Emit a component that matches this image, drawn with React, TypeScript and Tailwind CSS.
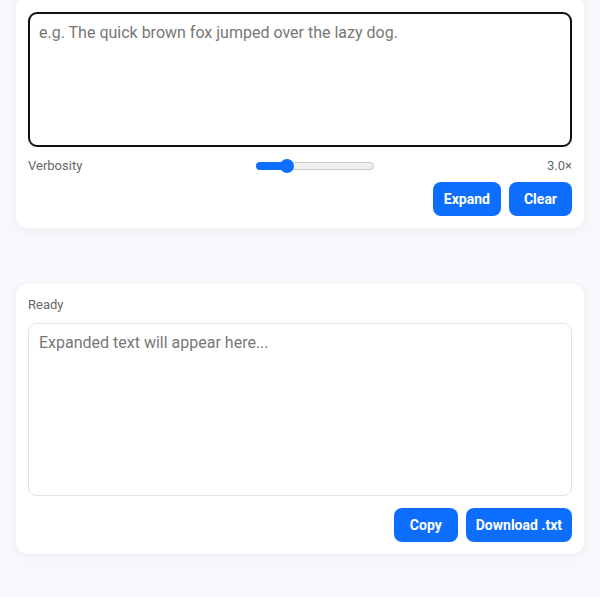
import { useState } from "react";

export default function App() {
  const [input, setInput] = useState("");
  const [verbosity] = useState(3);
  const percent = ((verbosity - 1) / 9) * 100;

  return (
    <main
      className="min-h-screen w-full bg-[#f6f8fb] px-4 pb-10"
      style={{ fontFamily: "Roboto, 'Liberation Sans', sans-serif" }}
    >
      <section className="-mt-[3px] rounded-xl bg-white p-3 pt-[15px] shadow-[0_2px_10px_rgba(15,23,42,0.05)]">
        <textarea
          autoFocus
          className="block h-[135px] w-full resize-none rounded-[9px] border-2 border-[#111] bg-white px-[9px] py-[7px] text-base text-[#222] placeholder:text-[#777] outline-none"
          placeholder="e.g. The quick brown fox jumped over the lazy dog."
          value={input}
          onChange={(event) => setInput(event.currentTarget.value)}
        />
        <div className="mt-[8px] flex h-[22px] items-center text-[13px] text-[#666]">
          <span className="w-[228px]">Verbosity</span>
          <div className="relative h-4 w-[118px]">
            <div className="absolute inset-x-0 top-1/2 h-2 -translate-y-1/2 rounded-full border border-[#c9c9c9] bg-[#efefef]" />
            <div
              className="absolute left-0 top-1/2 h-2 -translate-y-1/2 rounded-full bg-[#0d6efd]"
              style={{ width: `calc(${percent}% + 8px)` }}
            />
            <div
              className="absolute top-1/2 h-[14px] w-[14px] -translate-y-1/2 rounded-full bg-[#0d6efd]"
              style={{ left: `calc(${percent}% * 0.88 + 1px)` }}
            />
          </div>
          <span className="flex-1 text-right">{verbosity.toFixed(1)}×</span>
        </div>
        <div className="mt-[5px] flex justify-end gap-2">
          <button
            className="h-[34px] rounded-lg bg-[#0d6efd] px-[11px] text-sm font-bold text-white"
            type="button"
          >
            Expand
          </button>
          <button
            className="h-[34px] rounded-lg bg-[#0d6efd] px-[15px] text-sm font-bold text-white"
            type="button"
            onClick={() => setInput("")}
          >
            Clear
          </button>
        </div>
      </section>

      <section className="mt-14 rounded-xl bg-white p-3 shadow-[0_2px_10px_rgba(15,23,42,0.05)]">
        <p className="mt-[1px] text-[13px] leading-4 text-[#666]">Ready</p>
        <div className="mt-[10px] h-[173px] rounded-lg border border-[#e3e5e8] px-[10px] py-[7px] text-base text-[#777]">
          Expanded text will appear here...
        </div>
        <div className="mt-3 flex justify-end gap-2">
          <button
            className="h-[34px] rounded-lg bg-[#0d6efd] px-4 text-sm font-bold text-white"
            type="button"
          >
            Copy
          </button>
          <button
            className="h-[34px] rounded-lg bg-[#0d6efd] px-[10px] text-sm font-bold text-white"
            type="button"
          >
            Download .txt
          </button>
        </div>
      </section>
    </main>
  );
}
